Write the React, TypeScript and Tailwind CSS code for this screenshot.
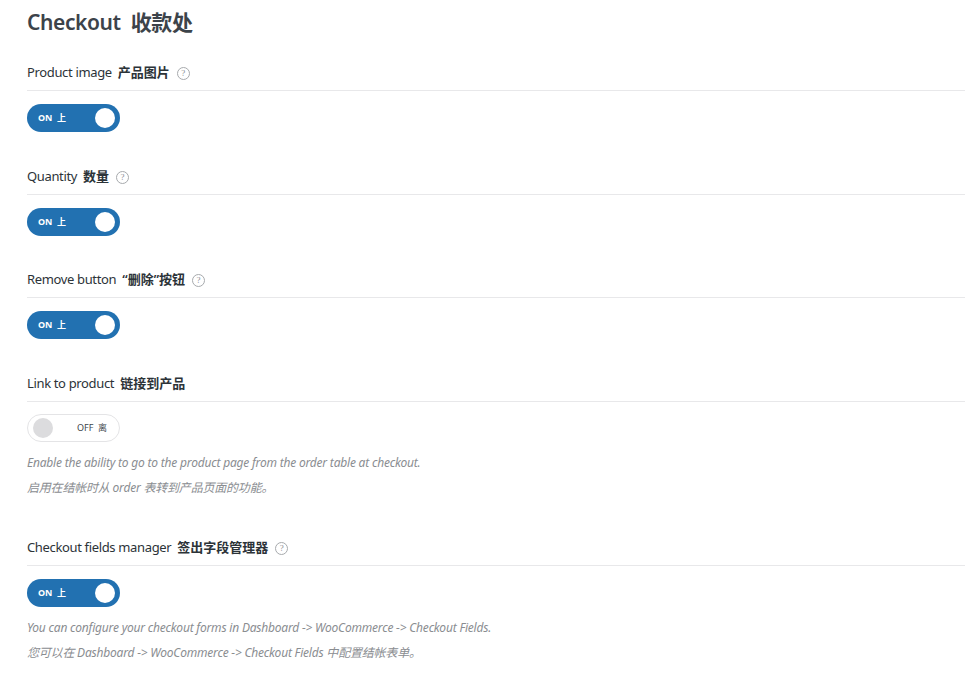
import React from "react";

const HelpIcon = () => (
  <span className="ml-[7px] inline-flex h-[13px] w-[13px] items-center justify-center rounded-full border border-[#a7aaad] text-[9px] leading-none text-[#8c8f94]" style={{ fontFamily: '"Liberation Serif", serif' }}>
    ?
  </span>
);

const Toggle = ({ on }: { on: boolean }) =>
  on ? (
    <div className="flex h-[28px] w-[93px] items-center justify-between rounded-full bg-[#2271b1] pl-[11px] pr-[5px]">
      <span className="text-[9px] font-bold text-white">ON&nbsp;&nbsp;上</span>
      <span className="h-[20px] w-[20px] rounded-full bg-white" />
    </div>
  ) : (
    <div className="flex h-[28px] w-[93px] items-center rounded-full border border-[#e4e4e6] bg-white pl-[5px]">
      <span className="h-[20px] w-[20px] rounded-full bg-[#dcdcde]" />
      <span className="ml-[24px] text-[9px] text-[#3c434a]">OFF&nbsp;&nbsp;离</span>
    </div>
  );

const Label = ({ en, zh, help }: { en: string; zh: string; help?: boolean }) => (
  <div className="box-content flex h-[18px] items-center border-b border-[#e8e8ea] pt-[2px] pb-[8px] text-[13px] text-[#2c3338]">
    <span className="tracking-[-0.35px]">{en}</span>
    <span className="ml-[6px] font-semibold">{zh}</span>
    {help && <HelpIcon />}
  </div>
);

const Desc = ({ children }: { children: React.ReactNode }) => (
  <p className="text-[12px] italic leading-[25px] tracking-[-0.2px] text-[#8a8d91]">{children}</p>
);

export default function App() {
  return (
    <div
      className="min-h-[686px] bg-white pl-[27px] pr-[14px] pt-[7px]"
      style={{ fontFamily: '"Noto Sans", "Noto Sans CJK SC", sans-serif' }}
    >
      <h1 className="text-[21px] font-semibold leading-[30px] tracking-[-0.4px] text-[#3c434a]">
        Checkout&nbsp;&nbsp;收款处
      </h1>

      <div className="mt-[25px]">
        <Label en="Product image" zh="产品图片" help />
        <div className="mt-[13px]">
          <Toggle on />
        </div>
      </div>

      <div className="mt-[34px]">
        <Label en="Quantity" zh="数量" help />
        <div className="mt-[13px]">
          <Toggle on />
        </div>
      </div>

      <div className="mt-[33px]">
        <Label en="Remove button" zh="“删除”按钮" help />
        <div className="mt-[13px]">
          <Toggle on />
        </div>
      </div>

      <div className="mt-[34px]">
        <Label en="Link to product" zh="链接到产品" />
        <div className="mt-[12px]">
          <Toggle on={false} />
        </div>
        <div className="mt-[8px]">
          <Desc>Enable the ability to go to the product page from the order table at checkout.</Desc>
          <Desc>启用在结帐时从 order 表转到产品页面的功能。</Desc>
        </div>
      </div>

      <div className="mt-[37px]">
        <Label en="Checkout fields manager" zh="签出字段管理器" help />
        <div className="mt-[13px]">
          <Toggle on />
        </div>
        <div className="mt-[8px]">
          <Desc>You can configure your checkout forms in Dashboard -&gt; WooCommerce -&gt; Checkout Fields.</Desc>
          <Desc>您可以在 Dashboard -&gt; WooCommerce -&gt; Checkout Fields 中配置结帐表单。</Desc>
        </div>
      </div>
    </div>
  );
}
